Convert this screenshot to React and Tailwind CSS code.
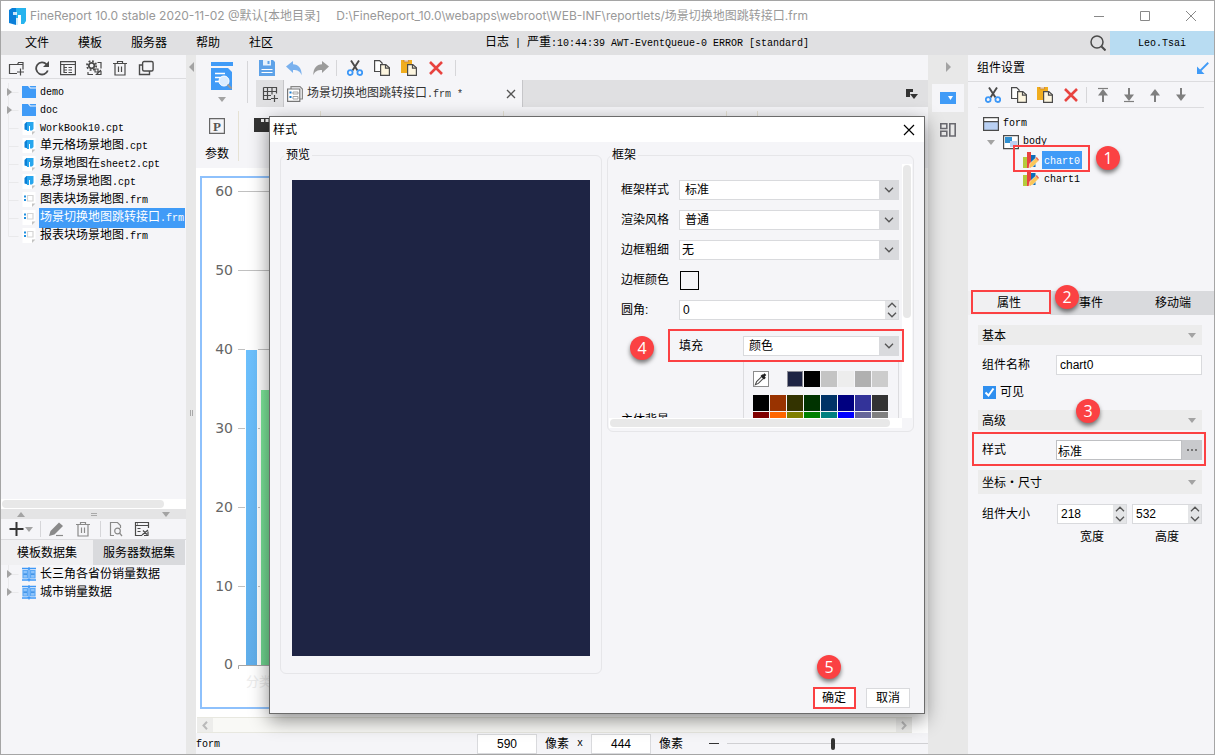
import React, { useState } from 'react';

const sans = 'font-["Liberation_Sans","Noto_Sans_CJK_SC",sans-serif]';

const files = [
  { name: 'demo', type: 'folder' },
  { name: 'doc', type: 'folder' },
  { name: 'WorkBook10.cpt', type: 'cpt' },
  { name: '单元格场景地图.cpt', type: 'cpt' },
  { name: '场景地图在sheet2.cpt', type: 'cpt' },
  { name: '悬浮场景地图.cpt', type: 'cpt' },
  { name: '图表块场景地图.frm', type: 'frm' },
  { name: '场景切换地图跳转接口.frm', type: 'frm' },
  { name: '报表块场景地图.frm', type: 'frm' },
];

const recentColors = ['#1e2444', '#000000', '#c4c4c4', '#ededed', '#b0b0b0', '#cccccc'];

const palette = [
  '#000000', '#993300', '#333300', '#003300', '#003366', '#000080', '#333399', '#333333',
  '#800000', '#ff6600', '#808000', '#008000', '#008080', '#0000ff', '#666699', '#808080',
];

// Latin runs are set in a half-width monospace next to the full-width hanzi
function Txt({ children }) {
  return children.split(/([\x20-\x7e]+)/).map((part, i) =>
    i % 2 ? (
      <span key={i} className='font-["Liberation_Mono",monospace] text-[10px] whitespace-pre'>
        {part}
      </span>
    ) : (
      part
    )
  );
}

function Icon({ children, size = 16, className = '' }) {
  return (
    <svg
      width={size}
      height={size}
      viewBox="0 0 16 16"
      fill="none"
      stroke="#4a4a4a"
      strokeWidth="1.2"
      aria-hidden="true"
      className={`shrink-0 ${className}`}
    >
      {children}
    </svg>
  );
}

function IconButton({ label, children }) {
  return (
    <button type="button" aria-label={label} className="block size-4 shrink-0">
      {children}
    </button>
  );
}

/* Icons */

const NewFolderIcon = () => (
  <Icon>
    <path d="M9 13.5H1.5v-9h8l1-2H15v7" />
    <path d="M9.5 4.5H15M12.5 8.500v7M9 12h7" />
  </Icon>
);
const RefreshIcon = () => (
  <Icon>
    <path d="M12.5 4.300A6 6 0 1 0 13.800 10.500" strokeWidth="1.8" />
    <path d="M15 1v6H9z" fill="#4a4a4a" stroke="none" />
  </Icon>
);
const ListIcon = () => (
  <Icon>
    <path d="M.6 1.600h14.800v13H.6zM.6 4.500h14.800M4 7.500h3M4 4.800v7.700h3M4 10h3M8.500 7.500H12M8.500 10H12M8.500 12.500H12" />
  </Icon>
);
const GearIcon = () => (
  <Icon>
    <circle cx="5.6" cy="5.6" r="2.8" strokeWidth="1.8" />
    <circle cx="5.6" cy="5.6" r="4.6" strokeWidth="1.8" strokeDasharray="1.8 1.81" />
    <path d="M11.5 2.500H15v6M2 12v2.500h5M9 9h3v3H9zM15 11v3.500h-4.500L15 10" />
  </Icon>
);
const TrashIcon = ({ color = '#4a4a4a' }) => (
  <Icon>
    <path d="M1 3.500h14M5.500 3.500v-2h5v2M3 3.500v11.500h10V3.500M6.500 6.500V12M9.500 6.500V12" stroke={color} />
  </Icon>
);
const CopiesIcon = () => (
  <Icon>
    <rect x="4.600" y="1.500" width="10.5" height="9.5" rx="1.5" strokeWidth="1.4" />
    <path d="M4.500 5h-3v9.500h10V11" strokeWidth="1.4" />
  </Icon>
);
const CutIcon = () => (
  <Icon>
    <path d="M4 .5l6.500 10M12 .5l-6.500 10" strokeWidth="1.9" />
    <circle cx="3.200" cy="12.600" r="2.4" stroke="#3d98f7" strokeWidth="1.8" />
    <circle cx="12.800" cy="12.600" r="2.4" stroke="#3d98f7" strokeWidth="1.8" />
  </Icon>
);
const CopyIcon = () => (
  <Icon>
    <path d="M.6.6h5l2.500 2.500v8.400H.6z" fill="#fff" />
    <path d="M6.600 4.600h5.200l3.600 3.200v7.600H6.600z" fill="#fdf6e0" />
    <path d="M11.500 4.600v3.500h4" />
  </Icon>
);
const PasteIcon = () => (
  <Icon>
    <path d="M0 0h11v13H0z" fill="#f0ad1e" stroke="none" />
    <path d="M3 0h4.500v1.800H3z" fill="#fff" stroke="#b5651d" strokeWidth=".6" />
    <path d="M6.600 4.600h5.200l3.600 3.200v7.600H6.600z" fill="#fdf6e0" />
    <path d="M11.500 4.600v3.500h4" />
  </Icon>
);
const DeleteIcon = () => (
  <Icon>
    <path d="M2 2l12 12M14 2L2 14" stroke="#e8433f" strokeWidth="2.6" />
  </Icon>
);
const SaveIcon = () => (
  <Icon>
    <path d="M0 0h14l2 2v14H0z" fill="#5ea2e8" stroke="none" />
    <path d="M4 0h8v5.500H4z" fill="#e6f1fc" stroke="none" />
    <path d="M8.500 1h2v3h-2z" fill="#5ea2e8" stroke="none" />
    <path d="M2.500 9.500h11M2.500 12.500h11" stroke="#fff" strokeWidth="1.2" />
  </Icon>
);
const UndoIcon = ({ flip }) => (
  <Icon className={flip ? '-scale-x-100' : ''}>
    <path
      d="M0 6.500L7 1v3.200c5.500.3 8.700 3.800 8.700 11-1.500-4-4.200-5.300-8.700-5.300V13z"
      fill={flip ? '#9b9b9b' : '#7ab1ee'}
      stroke="none"
    />
  </Icon>
);
const FileIcon = ({ type }) => {
  if (type === 'folder') {
    return (
      <Icon>
        <path d="M1 2h6l2 2.500h6V14H1z" fill="#409bf7" stroke="none" />
        <path d="M8.500 2H15v1.500H9.500z" fill="#409bf7" stroke="none" />
      </Icon>
    );
  }
  return (
    <Icon>
      <path d="M1.500 0h13v12l-3 3h-10z" fill="#fff" stroke="none" />
      <path d="M14.500 11.500H11V15z" fill="#c2c2c2" stroke="none" />
      {type === 'cpt' ? (
        <>
          <path d="M3.500 4l2-2H7v8.500l-3.500-1z" fill="#0b7fd6" stroke="none" />
          <path d="M6 2h6.500v7l-1.500 1.500h-2V6H8v5H6z" fill="#27a6ee" stroke="none" />
        </>
      ) : (
        <>
          <path d="M3 3.500h2v2H3zM3 7h2v2H3z" fill="#1f8fe0" stroke="none" />
          <path d="M6.500 3.500h5.500V9H6.500z" stroke="#d5d5d5" />
        </>
      )}
    </Icon>
  );
};
const DatasetIcon = () => (
  <Icon>
    <path d="M2 4.500h4.500V12H2zM9.500 4.500H14V12H9.500z" fill="#8cc3fb" stroke="#5ba8f5" />
    <path d="M2.500 8.200H6M10 8.200h3.500" stroke="#2f86e0" />
    <path d="M8 1v14.500M1 2.500h5.500L8 3.500l1.500-1H15M1 14h5.500L8 13l1.500 1H15" stroke="#3d98f7" strokeWidth="1.3" />
  </Icon>
);
const ChartIcon = () => (
  <Icon>
    <path d="M0 5h4v11H0z" fill="#b5cb3c" stroke="none" />
    <path d="M4 0h4v16H4z" fill="#e8433f" stroke="none" />
    <path d="M8 3h4.500v12H8z" fill="#0f6cb8" stroke="none" />
    <path d="M6 16l.8-4.500 6-5.500 2.700 3L9.500 15z" fill="#fbc658" stroke="#fff" strokeWidth=".5" />
    <path d="M12.500 6l1.300-1L16 7.800l-1 1.200z" fill="#ef6a4c" stroke="none" />
  </Icon>
);
const MoveIcon = ({ down, bar }) => (
  <Icon className={down ? 'rotate-180' : ''}>
    <path d="M8 15V6" stroke="#7f7f7f" strokeWidth="2" />
    <path d="M8 2l5 6.500H3z" fill="#7f7f7f" stroke="none" />
    {bar && <path d="M3 1.500h10" stroke="#7f7f7f" />}
  </Icon>
);
const Caret = ({ className = '' }) => (
  <svg width="8" height="5" viewBox="0 0 8 5" fill="#a3a3a3" aria-hidden="true" className={`shrink-0 ${className}`}>
    <path d="M0 0h8L4 5z" />
  </svg>
);
const Chevron = ({ up }) => (
  <svg
    width="10"
    height="6"
    viewBox="0 0 10 6"
    fill="none"
    stroke="#555"
    strokeWidth="1.3"
    aria-hidden="true"
    className={up ? 'rotate-180' : ''}
  >
    <path d="M1 .8l4 4 4-4" />
  </svg>
);

/* Shared pieces */

function Badge({ n, className }) {
  return (
    <span
      className={`absolute z-20 flex size-6 items-center justify-center rounded-full bg-[#fb4143] font-["Open_Sans",sans-serif] text-base text-white shadow-[0_3px_4px_rgba(0,0,0,0.5)] ${className}`}
    >
      {n}
    </span>
  );
}

function Mark({ className }) {
  return <span className={`pointer-events-none absolute z-10 border-2 border-[#fb4143] ${className}`} />;
}

function Sep() {
  return <span className="h-4 w-px shrink-0 bg-[#d6d6d9]" />;
}

function TreeLine({ arrow, last }) {
  return (
    <svg width="20" height="18" viewBox="0 0 20 18" aria-hidden="true" className="shrink-0">
      <path d={last ? 'M7.500 0v9.500h10' : 'M7.500 0v18M7.500 9.500h10'} fill="none" stroke="#e9e9eb" />
      {arrow && <path d="M6 5l5 4-5 4z" fill="#a3a3a3" />}
    </svg>
  );
}

function Select({ id, value, className = '', pad = 'pl-[5px]' }) {
  return (
    <div className={`flex h-5 border border-[#d9dadd] bg-white ${className}`}>
      <select id={id} defaultValue={value} className={`min-w-0 flex-1 appearance-none bg-white leading-4 outline-none ${pad}`}>
        <option>{value}</option>
      </select>
      <span className="pointer-events-none flex w-[19px] items-center justify-center bg-[#d9dadd]">
        <Chevron />
      </span>
    </div>
  );
}

function Spinner({ id, value, className = '' }) {
  return (
    <div className={`flex h-5 border border-[#d9dadd] bg-white ${className}`}>
      <input id={id} defaultValue={value} className="min-w-0 flex-1 bg-white pl-[3px] text-xs outline-none" />
      <span className="flex w-[13px] flex-col items-center justify-between bg-[#e4e5e7] py-px">
        <button type="button" aria-label="增加" className="flex">
          <Chevron up />
        </button>
        <button type="button" aria-label="减少" className="flex">
          <Chevron />
        </button>
      </span>
    </div>
  );
}

/* Window chrome */

function TitleBar() {
  return (
    <header className='flex h-[30px] shrink-0 items-center bg-white pl-2 font-["Inter","Noto_Sans_CJK_SC",sans-serif] text-[#999]'>
      <svg width="17" height="17" viewBox="0 0 17 17" aria-hidden="true">
        <path d="M0 2l3-2h4v17l-7-2z" fill="#0a7fd9" />
        <path d="M7 0h10v13l-2 3h-3V7H9v10H7z" fill="#27b4ee" />
        <path d="M4 4h4v3H4zM7 10h2v7H7z" fill="#fff" opacity=".8" />
      </svg>
      <span className="ml-1 whitespace-pre">FineReport 10.0 stable 2020-11-02 @默认[本地目录]</span>
      <span className="ml-4 flex-1 truncate">
        D:\FineReport_10.0\webapps\webroot\WEB-INF\reportlets/场景切换地图跳转接口.frm
      </span>
      <div className="flex gap-[34px] pr-[17px]">
        <button type="button" aria-label="最小化">
          <svg width="12" height="12" stroke="#888" fill="none">
            <path d="M1 6.500h10" />
          </svg>
        </button>
        <button type="button" aria-label="最大化">
          <svg width="12" height="12" stroke="#888" fill="none">
            <path d="M1.500 1.500h9v9h-9z" />
          </svg>
        </button>
        <button type="button" aria-label="关闭">
          <svg width="12" height="12" stroke="#888" fill="none">
            <path d="M1 1l10 10M11 1L1 11" />
          </svg>
        </button>
      </div>
    </header>
  );
}

function MenuBar() {
  return (
    <div className="flex h-6 shrink-0 items-center bg-[#e0e0e2]">
      <nav className="flex w-[484px] shrink-0 gap-[29px] pl-6">
        {['文件', '模板', '服务器', '帮助', '社区'].map((item) => (
          <button type="button" key={item}>
            {item}
          </button>
        ))}
      </nav>
      <p className="flex-1 whitespace-pre">
        <Txt>日志 | 严重:10:44:39 AWT-EventQueue-0 ERROR [standard]</Txt>
      </p>
      <button type="button" aria-label="搜索" className="mr-1">
        <Icon>
          <circle cx="7" cy="7" r="6" strokeWidth="1.5" />
          <path d="M11.500 11.500l4 4" strokeWidth="2" />
        </Icon>
      </button>
      <button type="button" className="h-full w-[104px] bg-[#b8dcf2]">
        <Txt>Leo.Tsai</Txt>
      </button>
    </div>
  );
}

/* Left column */

function Sidebar() {
  return (
    <aside className="flex w-[185px] shrink-0 flex-col overflow-hidden">
      <div className="flex h-6 shrink-0 items-center gap-[10px] border-b border-[#dcdcdf] pt-[3px] pl-[7px]">
        <IconButton label="新建文件夹"><NewFolderIcon /></IconButton>
        <IconButton label="刷新"><RefreshIcon /></IconButton>
        <IconButton label="所在文件夹"><ListIcon /></IconButton>
        <IconButton label="重命名"><GearIcon /></IconButton>
        <IconButton label="删除"><TrashIcon /></IconButton>
        <IconButton label="复制"><CopiesIcon /></IconButton>
      </div>

      <ul className="flex-1 overflow-hidden pt-1">
        {files.map((file, i) => (
          <li key={file.name} className="flex h-[18px] items-center whitespace-nowrap">
            <TreeLine arrow={file.type === 'folder'} last={i === files.length - 1} />
            <FileIcon type={file.type} />
            <span className={`ml-[2px] px-px ${i === 7 ? 'bg-[#409bf7] text-white' : ''}`}>
              <Txt>{file.name}</Txt>
            </span>
          </li>
        ))}
      </ul>

      <div className="h-[10px] shrink-0 bg-white pt-px pl-px">
        <div className="h-2 w-[162px] rounded-full bg-[#e8e8e8]" />
      </div>
      <div className="flex h-[10px] shrink-0 items-center justify-between bg-[#e4e4e5] px-4">
        <Caret className="rotate-180" />
        <span className="h-[3px] w-[6px] border-y border-[#a9a9a9]" />
        <Caret />
      </div>

      <div className="flex h-[21px] shrink-0 items-center border-b border-[#dcdcdf] pl-2">
        <IconButton label="添加数据集">
          <Icon>
            <path d="M7.500 1v14M.5 8h14" stroke="#333" strokeWidth="2" />
          </Icon>
        </IconButton>
        <Caret className="mr-[7px]" />
        <Sep />
        <div className="mr-[9px] ml-2 flex gap-[10px]">
          <IconButton label="编辑">
            <Icon>
              <path d="M0 15l1.500-5L10 1.500 14 5l-8.500 8.500z" fill="#8a8a8a" stroke="none" />
              <path d="M7 14.500h7" stroke="#8a8a8a" />
            </Icon>
          </IconButton>
          <IconButton label="删除数据集"><TrashIcon color="#8a8a8a" /></IconButton>
        </div>
        <Sep />
        <div className="ml-[7px] flex gap-[10px]">
          <IconButton label="预览">
            <Icon>
              <path d="M6 14.500H2.500v-13h7l3 3V7" stroke="#8a8a8a" />
              <circle cx="9.500" cy="10" r="2.8" stroke="#8a8a8a" />
              <path d="M11.500 12l2.500 3" stroke="#8a8a8a" />
            </Icon>
          </IconButton>
          <IconButton label="连接">
            <Icon>
              <path d="M8 14.500H1.500v-13h13V7M1.500 4.500h13M3.500 7.500h3M3.500 10.500h3M3 3h1" />
              <path d="M8 14l6-5M9 9.500l4 4M10 14.500h4v-4" />
            </Icon>
          </IconButton>
        </div>
      </div>

      <div className="flex h-[25px] shrink-0 pr-px">
        <button type="button" className="flex-1 bg-[#f0f0f2]">模板数据集</button>
        <button type="button" className="flex-1 bg-[#d9dadd]">服务器数据集</button>
      </div>
      <ul className="h-[189px] shrink-0">
        {['长三角各省份销量数据', '城市销量数据'].map((name, i) => (
          <li key={name} className="flex h-[18px] items-center whitespace-nowrap">
            <TreeLine arrow last={i === 1} />
            <DatasetIcon />
            <span className="ml-[3px]">{name}</span>
          </li>
        ))}
      </ul>
    </aside>
  );
}

/* Canvas with the chart that is being edited */

function ChartPreview() {
  const ticks = [60, 50, 40, 30, 20, 10];
  return (
    <svg width="110" height="529" aria-label="柱形图" className="block">
      <defs>
        <linearGradient id="blueBar" x1="0" y1="0" x2="0" y2="1">
          <stop offset="0" stopColor="#6cc0fd" />
          <stop offset="1" stopColor="#60aeea" />
        </linearGradient>
        <linearGradient id="greenBar" x1="0" y1="0" x2="0" y2="1">
          <stop offset="0" stopColor="#7ee89b" />
          <stop offset="1" stopColor="#70d590" />
        </linearGradient>
      </defs>
      <g fontFamily="DejaVu Sans" fontSize="14" fill="#666" textAnchor="end">
        {ticks.map((t, i) => (
          <text key={t} x="31" y={18 + i * 79}>
            {t}
          </text>
        ))}
        <text x="31" y="491">0</text>
      </g>
      {ticks.map((t, i) => (
        <path key={t} d={`M36 ${13.5 + i * 79}h74`} stroke="#c0c0c0" />
      ))}
      <path d="M43 171h13v316H43zM58 211h12v276H58z" fill="#fff" />
      <path d="M44 172h11v315H44z" fill="url(#blueBar)" />
      <path d="M59 212h11v275H59z" fill="url(#greenBar)" />
      <path d="M36.500 491v-3.500H110" fill="none" stroke="#a5a5a5" />
      <text x="44" y="508" fontFamily="Noto Sans CJK SC" fontSize="13" fill="#ececec">
        分类
      </text>
    </svg>
  );
}

function Editor() {
  return (
    <main className="flex min-w-0 flex-1 flex-col overflow-hidden">
      <div className="flex h-[52px] shrink-0">
        <div className="flex w-[51px] shrink-0 flex-col items-center pt-[7px]">
          <button type="button" aria-label="预览模板">
            <svg width="22" height="28" viewBox="0 0 22 28" aria-hidden="true">
              <path d="M0 0h22v4H0zM0 6h17l4 4v18H0z" fill="#409bf7" />
              <path d="M4 11.500h10M4 15.500h6M4 19.500h5" stroke="#fff" strokeWidth="1.500" />
              <circle cx="13" cy="19" r="5" fill="#d9ecff" stroke="#fff" />
              <path d="M16.500 22.500l4 4" stroke="#999" strokeWidth="2" />
            </svg>
          </button>
          <Caret className="mt-[7px]" />
        </div>
        <span className="mt-[6px] h-[42px] w-px bg-[#d6d6d9]" />
        <div className="flex min-w-0 flex-1 flex-col pl-2">
          <div className="flex h-[25px] items-center gap-[11px] pl-[3px]">
            <IconButton label="保存"><SaveIcon /></IconButton>
            <IconButton label="撤销"><UndoIcon /></IconButton>
            <IconButton label="恢复"><UndoIcon flip /></IconButton>
            <span className="-mr-px -ml-1 flex"><Sep /></span>
            <IconButton label="剪切"><CutIcon /></IconButton>
            <IconButton label="复制"><CopyIcon /></IconButton>
            <IconButton label="粘贴"><PasteIcon /></IconButton>
            <IconButton label="删除"><DeleteIcon /></IconButton>
            <Sep />
          </div>
          <div className="flex h-[27px] bg-[#e0e0e2]">
            <button
              type="button"
              aria-label="新建普通报表"
              className="flex w-7 items-center justify-center border-r border-[#c6c6c9]"
            >
              <Icon>
                <path d="M1.500 1.500v12H9M1.500 1.500h13v6M1.500 5.500h13M1.500 9.500H9M5.500 1.500v12M10 1.500v7M12.500 9v7M9 12.500h7" />
              </Icon>
            </button>
            <div className="flex w-[239px] items-center border-r border-[#c6c6c9] bg-[#f5f5f8] pl-[3px] text-[#333]">
              <Icon>
                <path d="M4 3V.6h9l2.400 2.400V13H13" stroke="#888" />
                <path d="M.6 3h12.200v12.400H.6z" stroke="#777" fill="#fff" />
                <path d="M2.500 5.500h2v2h-2zM2.500 10h2v2h-2z" fill="#1f7fd0" stroke="none" />
                <path d="M6 6h5v2H6zM6 10.500h5V13H6z" stroke="#999" strokeWidth=".9" />
              </Icon>
              <span className="ml-1 flex-1">
                <Txt>场景切换地图跳转接口.frm *</Txt>
              </span>
              <button type="button" aria-label="关闭标签" className="mr-[6px]">
                <svg width="10" height="10" stroke="#555" strokeWidth="1.3">
                  <path d="M1 1l8 8M9 1L1 9" />
                </svg>
              </button>
            </div>
            <button type="button" aria-label="全部标签" className="mr-[9px] ml-auto">
              <svg width="14" height="12" viewBox="0 0 14 12" fill="#333">
                <path d="M1 1h7v3H5v5H1z" />
                <path d="M5 6h8l-4 5z" />
              </svg>
            </button>
          </div>
        </div>
      </div>

      <div className="flex h-[61px] shrink-0 items-start">
        <button type="button" className="ml-[9px] flex w-6 flex-col items-center pt-[11px]">
          <Icon>
            <path d="M.6.6h14.800v14.800H.6z" stroke="#666" />
            <text x="8" y="12.500" textAnchor="middle" fontSize="13" fontFamily="Liberation Serif" fontWeight="700" fill="#555" stroke="none">
              P
            </text>
          </Icon>
          <span className="mt-[11px] leading-[18px]">参数</span>
        </button>
        <span className="mt-1 ml-[9px] h-[50px] w-px bg-[#e6e2d4]" />
        <svg width="16" height="14" className="mt-[11px] ml-[15px]" aria-label="标签布局">
          <path d="M0 0h16v14H0z" fill="#333" />
          <path d="M7 1h3v3H7zM11.500 1h3v3h-3z" fill="#eee" />
        </svg>
        <div className="ml-[50px] flex flex-1 gap-[30px]">
          <span className="mt-1 mr-[152px] h-[50px] w-px bg-[#e6e2d4]" />
          <span className="mt-1 mr-[192px] h-[50px] w-px bg-[#e6e2d4]" />
          <span className="mt-1 h-[50px] w-px bg-[#e6e2d4]" />
          <span className="mt-1 h-[50px] w-px bg-[#e6e2d4]" />
        </div>
      </div>

      <div className="min-h-0 flex-1 bg-white px-1 py-2">
        <div className="h-full overflow-hidden border-2 border-[#8ec1fc] bg-white">
          <ChartPreview />
        </div>
      </div>

      <div className="flex h-4 shrink-0 bg-white pr-4 pl-px">
        <div className="flex flex-1 justify-between border-y border-[#e8e8e0] bg-[#f9f9f6]">
          {[false, true].map((right) => (
            <button
              type="button"
              key={String(right)}
              aria-label={right ? '向右滚动' : '向左滚动'}
              className="flex w-4 items-center justify-center bg-[#ededeb]"
            >
              <svg width="6" height="9" fill="none" stroke="#b9b9b9" strokeWidth="2" className={right ? 'rotate-180' : ''}>
                <path d="M5 .8L1.500 4.500 5 8.200" />
              </svg>
            </button>
          ))}
        </div>
      </div>

      <div className="flex h-[21px] shrink-0 items-center">
        <span className="w-[281px] shrink-0">
          <Txt>form</Txt>
        </span>
        <input aria-label="宽度像素" defaultValue="590" className="h-5 w-[60px] border border-[#d9dadd] bg-white text-center outline-none" />
        <span className="mx-2">像素</span>
        <Txt>x</Txt>
        <input aria-label="高度像素" defaultValue="444" className="ml-2 h-5 w-[60px] border border-[#d9dadd] bg-white text-center outline-none" />
        <span className="ml-2">像素</span>
        <button type="button" aria-label="缩小" className="ml-[26px] h-px w-[10px] bg-[#333]" />
        <input
          type="range"
          aria-label="缩放"
          defaultValue="53"
          className="ml-2 h-px min-w-0 flex-1 appearance-none bg-[#d0d0d3] [&::-webkit-slider-thumb]:h-3 [&::-webkit-slider-thumb]:w-1 [&::-webkit-slider-thumb]:appearance-none [&::-webkit-slider-thumb]:rounded-sm [&::-webkit-slider-thumb]:bg-[#333]"
        />
      </div>
    </main>
  );
}

/* Right column */

function ToolStrip() {
  return (
    <div className="flex w-10 shrink-0 flex-col items-center bg-[#e8e8e8] pt-[7px]">
      <svg width="5" height="10" fill="#a3a3a3">
        <path d="M0 0l5 5-5 5z" />
      </svg>
      <button type="button" aria-label="组件设置" className="mt-3 flex h-7 w-8 items-center justify-center bg-[#f5f5f8]">
        <svg width="16" height="12">
          <path d="M0 0h16v12H0z" fill="#409bf7" />
          <path d="M8 4h5l-2.500 4z" fill="#fff" />
        </svg>
      </button>
      <button type="button" aria-label="组件库" className="mt-[11px]">
        <svg width="16" height="14" fill="none" stroke="#6a6a70" strokeWidth="1.6">
          <path d="M.8.8h6v4.700h-6zM.8 8.300h6V13h-6zM9.800.8h5.400V13H9.800z" />
        </svg>
      </button>
    </div>
  );
}

function Section({ title, tall }) {
  return (
    <button
      type="button"
      className={`flex w-full items-center justify-between bg-[#ececec] pr-[6px] pl-1 font-["Noto_Sans_CJK_SC",sans-serif] ${tall ? 'h-6' : 'h-5'}`}
    >
      {title}
      <Caret />
    </button>
  );
}

function PropertyPanel() {
  const [tab, setTab] = useState('属性');
  return (
    <aside className="flex w-[246px] shrink-0 flex-col">
      <div className="flex h-[27px] items-center justify-between border-b border-[#dcdcdf] pr-[5px] pl-[9px]">
        <h2>组件设置</h2>
        <button type="button" aria-label="收起">
          <Icon size={12}>
            <path d="M15 1L4 12" stroke="#409bf7" strokeWidth="2.4" />
            <path d="M0 16V6l10 10z" fill="#409bf7" stroke="none" />
          </Icon>
        </button>
      </div>

      <div className="mx-[10px] flex h-[26px] items-center gap-[10px] border-b border-[#dcdcdf] pl-[7px]">
        <IconButton label="剪切"><CutIcon /></IconButton>
        <IconButton label="复制"><CopyIcon /></IconButton>
        <IconButton label="粘贴"><PasteIcon /></IconButton>
        <IconButton label="删除"><DeleteIcon /></IconButton>
        <span className="-mr-[2px] -ml-[3px] flex"><Sep /></span>
        <IconButton label="置顶"><MoveIcon bar /></IconButton>
        <IconButton label="置底"><MoveIcon down bar /></IconButton>
        <IconButton label="上移"><MoveIcon /></IconButton>
        <IconButton label="下移"><MoveIcon down /></IconButton>
      </div>

      <div className="relative h-[183px] shrink-0 pt-[7px]">
        <ul>
          <li className="flex h-[18px] items-center gap-1 pl-[15px]">
            <Icon>
              <path d="M.6 1.600h14.800v12.800H.6z" fill="#b9d0f3" />
              <path d="M.6 1.600h14.800v4H.6z" fill="#fff" />
            </Icon>
            <Txt>form</Txt>
          </li>
          <li className="flex h-[18px] items-center gap-1 pl-[19px]">
            <Caret className="mr-1" />
            <Icon>
              <path d="M.6 1.600h14.800v13H.6z" fill="#fff" />
              <path d="M2 3h7v6H2z" fill="#2f8fd0" stroke="none" />
              <path d="M7 7h7v6H7z" fill="#b9d0f3" stroke="none" />
            </Icon>
            <Txt>body</Txt>
          </li>
          {['chart0', 'chart1'].map((name, i) => (
            <li key={name} className="flex h-[18px] items-center pl-[55px]">
              <ChartIcon />
              <span className={`ml-[3px] h-[18px] px-[2px] leading-[18px] ${i === 0 ? 'bg-[#409bf7] text-white' : ''}`}>
                <Txt>{name}</Txt>
              </span>
            </li>
          ))}
        </ul>
        <Mark className="top-[37px] left-[45px] h-[27px] w-[77px]" />
        <Badge n="1" className="top-[38px] left-[128px]" />
      </div>

      <div role="tablist" className="relative flex h-6 shrink-0">
        {['属性', '事件', '移动端'].map((name) => (
          <button
            type="button"
            role="tab"
            key={name}
            aria-selected={tab === name}
            onClick={() => setTab(name)}
            className={`flex-1 ${tab === name ? 'bg-[#f0f0f2]' : 'bg-[#d9dadd]'}`}
          >
            {name}
          </button>
        ))}
        <Mark className="-top-px left-[3px] h-6 w-20" />
        <Badge n="2" className="-top-[6px] left-[87px]" />
      </div>

      <div className="relative pt-[10px] pr-3 pl-[10px]">
        <Section title="基本" />
        <div className="mt-[10px] flex h-5 items-center pl-1">
          <label htmlFor="widget-name" className="w-[74px]">组件名称</label>
          <input id="widget-name" defaultValue="chart0" className="h-5 min-w-0 flex-1 border border-[#d9dadd] bg-white pl-[3px] outline-none" />
        </div>
        <label className="relative mt-2 flex h-[18px] items-center gap-1 pl-[5px]">
          <input type="checkbox" defaultChecked className="peer size-[13px] appearance-none border border-[#2f8fef] bg-white checked:bg-[#2f8fef]" />
          <svg width="13" height="13" fill="none" stroke="#fff" strokeWidth="2" className="pointer-events-none absolute left-[5px] hidden peer-checked:block">
            <path d="M2.500 6.500l3 3 5-7" />
          </svg>
          可见
        </label>
        <div className="mt-[9px]">
          <Section title="高级" />
        </div>
        <div className="relative mt-[10px] flex h-5 items-center pl-1">
          <label htmlFor="widget-style" className="w-[74px]">样式</label>
          <input id="widget-style" defaultValue="标准" className="h-5 min-w-0 flex-1 border border-[#bfc0c3] bg-white pl-px outline-none" />
          <button type="button" aria-label="编辑样式" className="flex h-5 w-5 items-center justify-center gap-[2px] bg-[#c9cacd]">
            {[0, 1, 2].map((dot) => (
              <span key={dot} className="size-[2px] bg-[#777]" />
            ))}
          </button>
          <Mark className="-top-[8px] -left-[6px] h-[34px] w-[234px]" />
          <Badge n="3" className="-top-[41px] left-[98px]" />
        </div>
        <div className="mt-[10px]">
          <Section title="坐标・尺寸" tall />
        </div>
        <div className="mt-[10px] flex pl-1">
          <span className="w-[75px] leading-5">组件大小</span>
          <div className="w-[70px] text-center">
            <Spinner id="size-w" value="218" />
            <label htmlFor="size-w" className="mt-1 block">宽度</label>
          </div>
          <div className="ml-[5px] w-[70px] text-center">
            <Spinner id="size-h" value="532" />
            <label htmlFor="size-h" className="mt-1 block">高度</label>
          </div>
        </div>
      </div>
    </aside>
  );
}

/* Style dialog */

function Field({ label, htmlFor, children }) {
  return (
    <div className="mb-[10px] flex h-5 items-center">
      <label htmlFor={htmlFor} className="w-[58px] shrink-0">{label}</label>
      {children}
    </div>
  );
}

function Swatch({ color, active }) {
  return (
    <button
      type="button"
      aria-label={color}
      className={`size-4 ${active ? 'border border-[#8c8c96]' : ''}`}
      style={{ backgroundColor: color }}
    />
  );
}

function StyleDialog() {
  return (
    <div
      role="dialog"
      aria-label="样式"
      className="absolute top-[115px] left-[268px] z-30 flex h-[598px] w-[656px] flex-col border border-[#6b6b6b] bg-[#f5f5f8] shadow-[0_6px_18px_rgba(0,0,0,0.45)]"
    >
      <div className="flex h-[25px] shrink-0 items-center justify-between bg-white pr-[9px] pl-[3px]">
        <h2>样式</h2>
        <button type="button" aria-label="关闭">
          <svg width="12" height="12" stroke="#000" strokeWidth="1.2">
            <path d="M1 1l10 10M11 1L1 11" />
          </svg>
        </button>
      </div>

      <div className="flex flex-1 items-start gap-[5px] px-[10px] pt-1">
        <fieldset className="h-[528px] w-[322px] rounded-md border border-[#e6e6e9] px-[11px] pt-4">
          <legend className="-ml-2 h-[18px] px-[2px] leading-[18px]">预览</legend>
          <div className="h-[476px] bg-[#1e2444]" />
        </fieldset>

        <fieldset className="relative h-[286px] min-w-0 flex-1 rounded-md border border-[#e6e6e9] px-px">
          <legend className="ml-px h-[18px] px-[2px] leading-[18px]">框架</legend>
          <div className="flex h-[254px]">
            <div className="min-w-0 flex-1 overflow-hidden pt-4 pr-[3px] pl-3">
              <Field label="框架样式" htmlFor="frame-style">
                <Select id="frame-style" value="标准" className="flex-1" />
              </Field>
              <Field label="渲染风格" htmlFor="render-style">
                <Select id="render-style" value="普通" className="flex-1" />
              </Field>
              <Field label="边框粗细" htmlFor="border-width">
                <Select id="border-width" value="无" pad="pl-[2px]" className="flex-1" />
              </Field>
              <Field label="边框颜色" htmlFor="border-color">
                <button id="border-color" type="button" className="ml-px size-[19px] border border-black bg-[#f5f5f8]" />
              </Field>
              <Field label="圆角:" htmlFor="radius">
                <Spinner id="radius" value="0" className="flex-1" />
              </Field>
              <div className="mt-4 flex h-5 items-center pl-[58px]">
                <label htmlFor="fill" className="w-16">填充</label>
                <Select id="fill" value="颜色" className="flex-1" />
              </div>
              <div className="flex">
                <span className="w-[122px] shrink-0 pt-[55px] leading-[18px]">主体背景</span>
                <div className="mt-1 flex-1 border border-[#dcdcdf] pt-[10px] pl-[9px]">
                  <div className="flex gap-px">
                    <button type="button" aria-label="取色" className="mr-[17px] size-4 border border-[#8c8c8c] bg-white">
                      <Icon size={14}>
                        <path d="M1.500 14.500L3 11l6-6 2 2-6 6z" fill="#fff" />
                        <path d="M8.500 3.500l4 4M10 5.500l3-3" strokeWidth="3" stroke="#222" />
                      </Icon>
                    </button>
                    {recentColors.map((color, i) => (
                      <Swatch key={color} color={color} active={i === 0} />
                    ))}
                  </div>
                  <div className="mt-2 flex w-[136px] flex-wrap gap-px">
                    {palette.map((color) => (
                      <Swatch key={color} color={color} />
                    ))}
                  </div>
                </div>
              </div>
            </div>
            <div className="w-[10px] shrink-0 bg-white px-px pt-px">
              <div className="h-[153px] rounded-full bg-[#e8e8e8]" />
            </div>
          </div>
          <div className="mr-[10px] h-[10px] bg-white p-px">
            <div className="h-2 w-[280px] rounded-full bg-[#e8e8e8]" />
          </div>
          <Mark className="top-[165px] left-[60px] h-[33px] w-[236px]" />
          <Badge n="4" className="top-[172px] left-[22px]" />
        </fieldset>
      </div>

      <div className="relative flex h-[28px] shrink-0 items-start justify-end gap-[11px] pt-[3px] pr-[14px]">
        <button type="button" className="h-5 w-[42px] bg-white">确定</button>
        <button type="button" className="h-5 w-11 border border-[#d9dadd] bg-white">取消</button>
        <Mark className="top-[2px] right-[68px] h-[22px] w-[43px]" />
        <Badge n="5" className="-top-[30px] right-[83px]" />
      </div>
    </div>
  );
}

export default function App() {
  return (
    <div
      className={`relative flex h-screen min-h-[700px] flex-col overflow-hidden border border-[#a5a5a5] bg-[#f5f5f8] text-xs leading-[18px] text-black ${sans}`}
    >
      <TitleBar />
      <MenuBar />
      <div className="flex min-h-0 flex-1">
        <Sidebar />
        <div className="flex w-[10px] shrink-0 flex-col items-center bg-[#e8e8e8] pt-[7px]">
          <svg width="5" height="10" fill="#a3a3a3">
            <path d="M5 0L0 5l5 5z" />
          </svg>
          <span className="my-auto h-[6px] w-[3px] border-x border-[#a9a9a9]" />
        </div>
        <Editor />
        <ToolStrip />
        <PropertyPanel />
      </div>
      <StyleDialog />
    </div>
  );
}
